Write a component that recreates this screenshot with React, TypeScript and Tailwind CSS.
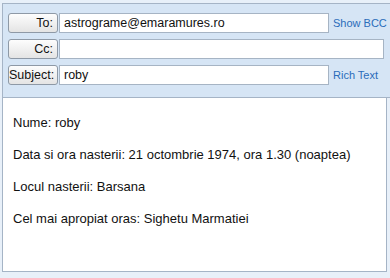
const FIELDS = [
  { label: "To:", value: "astrograme@emaramures.ro", link: "Show BCC" },
  { label: "Cc:", value: "", link: "" },
  { label: "Subject:", value: "roby", link: "Rich Text" },
];

const LINES = [
  "Nume: roby",
  "Data si ora nasterii: 21 octombrie 1974, ora 1.30 (noaptea)",
  "Locul nasterii: Barsana",
  "Cel mai apropiat oras: Sighetu Marmatiei",
];

function FieldRow({ label, value, link }: { label: string; value: string; link: string }) {
  return (
    <div className="flex items-center h-[20px]">
      <button className="w-[50px] h-[20px] shrink-0 rounded-[3px] border border-[#8e99a6] bg-gradient-to-b from-[#fdfdfd] to-[#e4e4e4] text-right pr-[4px] text-[12.5px] text-[#111]">
        {label}
      </button>
      <div
        className={
          link
            ? "ml-[1px] w-[270px] h-[20px] border border-[#a6b4c4] bg-white px-[4px] flex items-center text-[12.5px] text-[#111]"
            : "ml-[1px] w-[325px] h-[20px] border border-[#a6b4c4] bg-white px-[4px] flex items-center text-[12.5px] text-[#111]"
        }
      >
        {value}
      </div>
      {link && (
        <a className="ml-[4px] text-[11px] text-[#2a6cba] cursor-pointer whitespace-nowrap">
          {link}
        </a>
      )}
    </div>
  );
}

export default function App() {
  return (
    <div
      className="w-[390px] h-[278px] bg-[#e8f0f9] pl-[2px] pt-[3px] overflow-hidden"
      style={{ fontFamily: '"Liberation Sans", Arial, sans-serif' }}
    >
      <div className="border-l border-t border-[#a5b4c6]">
        <div className="bg-[#d6e5f5] border-b border-[#a5b4c6] pl-[5px] pt-[9px] pb-[12px] flex flex-col gap-[6px]">
          {FIELDS.map((f) => (
            <FieldRow key={f.label} {...f} />
          ))}
        </div>
        <div className="mr-[3px] h-[174px] bg-white border-r border-b border-[#a5b4c6] pl-[10px] pt-[17px] flex flex-col gap-[16px] text-[13px] leading-4 text-[#111]">
          {LINES.map((l) => (
            <p key={l}>{l}</p>
          ))}
        </div>
      </div>
    </div>
  );
}
